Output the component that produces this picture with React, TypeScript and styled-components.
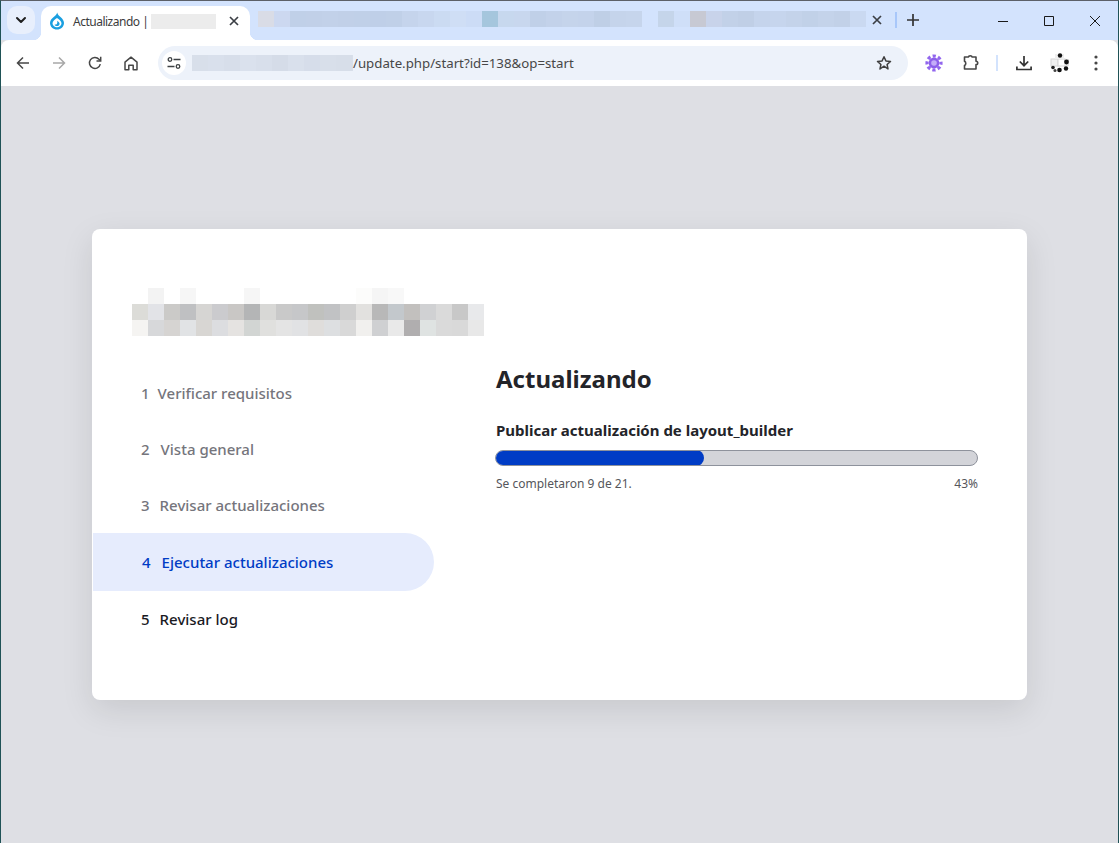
import styled, { createGlobalStyle } from 'styled-components'

const GlobalStyle = createGlobalStyle`
    html, body {
        margin: 0;
        padding: 0;
        height: 100%;
        overflow: hidden;
        background: #dedfe4;
    }
    * {
        box-sizing: border-box;
    }
`

const logoRows = [
    ['', '#f3f3f3', '', '#f6f6f6', '', '', '', '#f6f6f6', '', '', '', '', '', '', '#fcfcfb', '#f5f5f5', '#f8f8f8', '', '', '', '', ''],
    ['#dcdcd8', '#e2e3e7', '#cbcac8', '#bfc0c2', '#d6d5d3', '#cbcbce', '#c9c7c5', '#b4b5b6', '#d8d8d6', '#c9c9c9', '#c6c7c9', '#c0c1be', '#c1c2c4', '#cfcfcf', '#e2e1df', '#b8b8b8', '#c3c8cc', '#c2c0be', '#d0d1d3', '#dadada', '#c8c8c8', '#e8e9eb'],
    ['#f5f4f2', '#d7d8da', '#d6d4d2', '#e1e3e5', '#d8d6d3', '#dcdde0', '#e5e3e1', '#d2d5d3', '#e0e0de', '#e4e4e4', '#e1e2e4', '#dfdddb', '#dddfe1', '#d9d9d9', '#f1f0ee', '#cfd0d2', '#e9e9e9', '#b0aeaf', '#dfe3e2', '#dadada', '#d9d9d9', '#e8e8e8'],
]

const tabBlurA = ['#d9dce6', '#ccd8f0', '#c0d0e8', '#c1d0e8', '#c2d1e9', '#c1d0e8', '#c0d0e8', '#bfcfe8', '#c0d0e8', '#c5d4ec', '#c8d7ef', '#cbdbf2', '#cfdef5', '#ccdcf6', '#a5c6dd', '#c7d8ee', '#c8d7ee', '#c0d0e8', '#c3d2ea', '#c5d4eb', '#c4d3eb', '#bfcfe6', '#c5d4eb', '#c6d5ec']
const tabBlurB = ['#c5d5ea', '#cfdff8', '#c7c9d3', '#c8d3ea', '#c2d1e8', '#c0cfe6', '#c5d4ec', '#c6d5ed', '#c4d3ea', '#c1d1e8', '#c4d3ea', '#c2d1e8', '#cad9f1']
const urlBlur = ['#d8dfea', '#d9e0ec', '#d7deea', '#dae1ed', '#d8dfeb', '#d5dce8', '#d9e0ec', '#d6ddea', '#d8dfea', '#d7dee9', '#d8dfea']

const steps = [
    { num: 1, label: 'Verificar requisitos', state: 'done', gap: 8 },
    { num: 2, label: 'Vista general', state: 'done', gap: 11 },
    { num: 3, label: 'Revisar actualizaciones', state: 'done', gap: 10 },
    { num: 4, label: 'Ejecutar actualizaciones', state: 'active', gap: 11 },
    { num: 5, label: 'Revisar log', state: 'next', gap: 10 },
] as const

const DropIcon = () => (
    <svg width="16" height="18" viewBox="0 0 16 18">
        <path d="M8.200 .5C8.600 2.800 10.300 3.900 11.800 5.200 13.600 6.800 15 8.700 15 11 15 14.800 11.800 17.500 8 17.500 4.200 17.500 1 14.800 1 11 1 8.700 2.500 6.700 4.400 5.200 6 3.900 7.700 2.800 8.200 .5Z" fill="#1a9fe0" />
        <path d="M8 6C9.800 7.300 12.500 8.900 12.500 11.300 12.500 13.600 10.500 15.300 8 15.300 5.500 15.300 3.500 13.600 3.500 11.300 3.500 8.900 6.200 7.300 8 6Z" fill="#fff" />
        <path d="M8.200 8.700C9.600 9.700 10.600 10.500 10.600 11.800 10.600 13.200 9.400 14.100 8 14.100 6.800 14.100 5.800 13.500 5.600 12.500 7.300 13 8.800 12 8.200 8.700Z" fill="#1a9fe0" />
    </svg>
)

const Chevron = () => (
    <svg width="12" height="8" viewBox="0 0 12 8" fill="none" stroke="#1f1f1f" strokeWidth="2" strokeLinecap="round" strokeLinejoin="round">
        <path d="M2 2l4 4 4-4" />
    </svg>
)

const SmallClose = () => (
    <svg width="10" height="10" viewBox="0 0 10 10" fill="none" stroke="#3b3f45" strokeWidth="1.700">
        <path d="M1 1l8 8M9 1L1 9" />
    </svg>
)

const ArrowIcon = ({ flip, color }: { flip?: boolean, color: string }) => (
    <svg width="14" height="14" viewBox="0 0 14 14" fill="none" stroke={color} strokeWidth="1.500" style={flip ? { transform: 'scaleX(-1)' } : undefined}>
        <path d="M13 7H1.500M7 1.500L1.500 7 7 12.500" />
    </svg>
)

const ReloadIcon = () => (
    <svg width="14" height="14" viewBox="0 0 14 14" fill="none" stroke="#474747" strokeWidth="1.500">
        <path d="M12.300 8.200A5.500 5.500 0 1 1 11 3.200L12.600 4.800" />
        <path d="M12.700.8v4.200H8.500" />
    </svg>
)

const HomeIcon = () => (
    <svg width="14" height="15" viewBox="0 0 14 15" fill="none" stroke="#474747" strokeWidth="1.500" strokeLinejoin="round">
        <path d="M1 6.200L7 1.200l6 5v7.600H9.200V9.300H4.800v4.500H1z" />
    </svg>
)

const TuneIcon = () => (
    <svg width="14" height="14" viewBox="0 0 14 14" fill="none" stroke="#3c4043" strokeWidth="1.300">
        <circle cx="3" cy="3.500" r="1.800" />
        <path d="M6.500 3.500H13.500M.5 10.500H7.500" />
        <circle cx="11" cy="10.500" r="1.800" />
    </svg>
)

const StarIcon = () => (
    <svg width="16" height="16" viewBox="0 0 16 16" fill="none" stroke="#3f3f3f" strokeWidth="1.500" strokeLinejoin="round">
        <path d="M8 1.700l1.900 4.200 4.600.5-3.400 3.100.9 4.500L8 11.200l-4 2.800.9-4.500L1.500 6.400l4.600-.5z" />
    </svg>
)

const GearIcon = () => (
    <svg width="18" height="18" viewBox="0 0 18 18">
        <circle cx="9" cy="9" r="7" fill="none" stroke="#9266ee" strokeWidth="3.200" strokeDasharray="3.200 2.300" strokeDashoffset="1.600" />
        <circle cx="9" cy="9" r="5.400" fill="#8d60ea" />
        <circle cx="9" cy="9" r="2.800" fill="#c4adf8" />
    </svg>
)

const PuzzleIcon = () => (
    <svg width="18" height="16" viewBox="0 0 18 16" fill="none" stroke="#474747" strokeWidth="1.600" strokeLinejoin="round">
        <path d="M2.500 2H6.500C6.500 .4 10 .4 10 2h4v4.200c2.300 0 2.300 3.400 0 3.400V14H2.500V10.500C4.200 9.800 4.200 7 2.500 6.300z" />
    </svg>
)

const DownloadIcon = () => (
    <svg width="16" height="16" viewBox="0 0 16 16" fill="none" stroke="#333" strokeWidth="1.700">
        <path d="M8 1v9.500M3.800 6.500L8 10.700l4.200-4.200M.9 11.500v3h14.200v-3" />
    </svg>
)

const AvatarIcon = () => (
    <svg width="20" height="22" viewBox="0 0 20 22">
        <rect x="1" y="7" width="7" height="7" fill="#f1f1f1" stroke="#d6d6d6" />
        <rect x="8" y="7" width="7" height="7" fill="#fff" stroke="#d6d6d6" />
        <rect x="15" y="7" width="4" height="7" fill="#e4e4e4" />
        <rect x="5" y="2" width="9" height="5" fill="#efefef" />
        <circle cx="10" cy="3.500" r="2.200" fill="#111" />
        <circle cx="16.500" cy="10" r="2.400" fill="#111" />
        <circle cx="3" cy="15.500" r="1.800" fill="#222" />
        <circle cx="9.500" cy="18" r="2.300" fill="#111" />
        <circle cx="16" cy="16.500" r="2.200" fill="#111" />
        <circle cx="5" cy="18.500" r="1.500" fill="#444" />
    </svg>
)

const DotsIcon = () => (
    <svg width="4" height="16" viewBox="0 0 4 16" fill="#474747">
        <circle cx="2" cy="2" r="1.600" />
        <circle cx="2" cy="8" r="1.600" />
        <circle cx="2" cy="14" r="1.600" />
    </svg>
)

export default function App() {
    return (
        <Window>
            <GlobalStyle />
            <TabStrip>
                <TabSearch><Chevron /></TabSearch>
                <ActiveTab>
                    <DropIcon />
                    <TabTitle>Actualizando |</TabTitle>
                    <TitleBlur />
                    <TabClose><SmallClose /></TabClose>
                </ActiveTab>
                <BlurRow $ml={8}>
                    {tabBlurA.map((c, i) => <BlurCell key={i} $c={c} />)}
                </BlurRow>
                <BlurRow $ml={16}>
                    {tabBlurB.map((c, i) => <BlurCell key={i} $c={c} />)}
                </BlurRow>
                <SecondClose><SmallClose /></SecondClose>
                <TabDivider />
                <NewTab>
                    <svg width="12" height="12" viewBox="0 0 12 12" stroke="#333" strokeWidth="1.700"><path d="M6 0v12M0 6h12" /></svg>
                </NewTab>
                <WindowControls>
                    <WindowButton>
                        <svg width="10" height="10" viewBox="0 0 10 10" stroke="#1a1a1a"><path d="M0 5.500h10" /></svg>
                    </WindowButton>
                    <WindowButton>
                        <svg width="10" height="10" viewBox="0 0 10 10" fill="none" stroke="#1a1a1a"><path d="M.5.500h9v9h-9z" /></svg>
                    </WindowButton>
                    <WindowButton>
                        <svg width="10" height="10" viewBox="0 0 10 10" stroke="#1a1a1a"><path d="M0 0l10 10M10 0L0 10" /></svg>
                    </WindowButton>
                </WindowControls>
            </TabStrip>
            <Toolbar>
                <NavButton><ArrowIcon color="#474747" /></NavButton>
                <NavButton><ArrowIcon flip color="#a8a8a8" /></NavButton>
                <NavButton><ReloadIcon /></NavButton>
                <NavButton><HomeIcon /></NavButton>
                <AddressBar>
                    <SiteInfo><TuneIcon /></SiteInfo>
                    <UrlBlur>
                        {urlBlur.map((c, i) => <BlurCell key={i} $c={c} />)}
                    </UrlBlur>
                    <UrlText>/update.php/start?id=138&amp;op=start</UrlText>
                    <BookmarkSlot><StarIcon /></BookmarkSlot>
                </AddressBar>
                <ToolGroup>
                    <NavButton><GearIcon /></NavButton>
                    <PuzzleSlot><PuzzleIcon /></PuzzleSlot>
                    <ToolDivider />
                    <NavButton><DownloadIcon /></NavButton>
                    <NavButton><AvatarIcon /></NavButton>
                    <NavButton><DotsIcon /></NavButton>
                </ToolGroup>
            </Toolbar>
            <Page>
                <Card>
                    <LogoMosaic>
                        {logoRows.flat().map((c, i) => <BlurCell key={i} $c={c || 'transparent'} />)}
                    </LogoMosaic>
                    <CardBody>
                        <StepList>
                            {steps.map(step => (
                                <StepItem key={step.num} $state={step.state}>
                                    <StepNumber $gap={step.gap}>{step.num}</StepNumber>
                                    {step.label}
                                </StepItem>
                            ))}
                        </StepList>
                        <Main>
                            <Title>Actualizando</Title>
                            <ProgressLabel>Publicar actualización de layout_builder</ProgressLabel>
                            <ProgressTrack>
                                <ProgressFill style={{ width: '43.500%' }} />
                            </ProgressTrack>
                            <ProgressInfo>
                                <span>Se completaron 9 de 21.</span>
                                <span>43%</span>
                            </ProgressInfo>
                        </Main>
                    </CardBody>
                </Card>
            </Page>
        </Window>
    )
}

const Window = styled.div`
    width: 1119px;
    height: 843px;
    display: flex;
    flex-direction: column;
    border-left: 1px solid #1f5256;
    border-right: 1px solid #1f5256;
    border-top: 1px solid #5c6068;
    background: #dedfe4;
    font-family: "Noto Sans", "Liberation Sans", sans-serif;
`

const TabStrip = styled.div`
    height: 39px;
    flex: none;
    display: flex;
    align-items: flex-start;
    background: #d3e3fd;
`

const TabSearch = styled.div`
    width: 28px;
    height: 28px;
    margin: 5px 0 0 6px;
    flex: none;
    display: flex;
    align-items: center;
    justify-content: center;
    border-radius: 10px;
    background: #e8effc;
`

const ActiveTab = styled.div`
    position: relative;
    width: 209px;
    height: 34px;
    margin: 5px 0 0 6px;
    flex: none;
    padding: 0 8px 4px 8px;
    display: flex;
    align-items: center;
    background: #fff;
    border-radius: 10px 10px 0 0;

    &::before, &::after {
        content: '';
        position: absolute;
        bottom: 0;
        width: 8px;
        height: 8px;
    }
    &::before {
        left: -8px;
        background: radial-gradient(circle at 0 0, transparent 8px, #fff 8.500px);
    }
    &::after {
        right: -8px;
        background: radial-gradient(circle at 100% 0, transparent 8px, #fff 8.500px);
    }
`

const TabTitle = styled.span`
    margin-left: 8px;
    font: 400 12px "Noto Sans", sans-serif;
    letter-spacing: -0.5px;
    color: #3c3c3c;
    white-space: nowrap;
`

const TitleBlur = styled.span`
    width: 65px;
    height: 15px;
    margin-left: 3px;
    background: #ececec;
`

const TabClose = styled.span`
    margin-left: auto;
    margin-right: 3px;
    display: flex;
`

const BlurRow = styled.div<{ $ml: number }>`
    display: flex;
    margin: 10px 0 0 ${p => p.$ml}px;
    height: 16px;
    flex: none;
`

const BlurCell = styled.span<{ $c: string }>`
    display: block;
    width: 16px;
    height: 16px;
    flex: none;
    background: ${p => p.$c};
`

const SecondClose = styled.span`
    margin: 14px 0 0 6px;
    display: flex;
`

const TabDivider = styled.span`
    width: 2px;
    height: 16px;
    margin: 11px 0 0 13px;
    background: #a8c7fa;
`

const NewTab = styled.span`
    margin: 13px 0 0 10px;
    display: flex;
`

const WindowControls = styled.div`
    margin: 0 0 0 auto;
    display: flex;
`

const WindowButton = styled.span`
    width: 46px;
    height: 39px;
    display: flex;
    align-items: center;
    justify-content: center;
`

const Toolbar = styled.div`
    height: 46px;
    flex: none;
    display: flex;
    align-items: center;
    padding-left: 4px;
    background: #fff;
    border-radius: 8px 8px 0 0;
`

const NavButton = styled.span`
    width: 36px;
    height: 34px;
    flex: none;
    display: flex;
    align-items: center;
    justify-content: center;
`

const PuzzleSlot = styled(NavButton)`
    margin-left: 1px;
    margin-right: -1px;
`

const AddressBar = styled.div`
    width: 750px;
    height: 34px;
    margin-left: 9px;
    flex: none;
    display: flex;
    align-items: center;
    padding-left: 4px;
    border-radius: 17px;
    background: #edf2fa;
`

const SiteInfo = styled.span`
    width: 24px;
    height: 24px;
    flex: none;
    display: flex;
    align-items: center;
    justify-content: center;
    border-radius: 50%;
    background: #fff;
`

const UrlBlur = styled.div`
    display: flex;
    width: 161px;
    margin-left: 6px;
    overflow: hidden;
`

const UrlText = styled.span`
    font: 400 13.250px "Noto Sans", sans-serif;
    color: #474747;
    white-space: nowrap;
`

const BookmarkSlot = styled.span`
    margin-left: auto;
    margin-right: 16px;
    display: flex;
`

const ToolGroup = styled.div`
    display: flex;
    align-items: center;
    margin-left: 8px;
`

const ToolDivider = styled.span`
    width: 2px;
    height: 16px;
    margin: 0 8px;
    background: #d3e3fd;
`

const Page = styled.main`
    flex: 1;
    display: flex;
    align-items: center;
    justify-content: center;
`

const Card = styled.section`
    width: 935px;
    height: 471px;
    padding-top: 59px;
    border-radius: 8px;
    background: #fff;
    box-shadow: 0 10px 32px rgba(0, 0, 0, 0.1);
`

const LogoMosaic = styled.div`
    display: grid;
    grid-template-columns: repeat(22, 16px);
    margin-left: 40px;
`

const CardBody = styled.div`
    display: grid;
    grid-template-columns: 341px 483px;
    column-gap: 61px;
    margin-top: 29px;
    padding-left: 1px;
`

const StepList = styled.ol`
    list-style: none;
    margin: 0;
    padding: 0;
`

const stepColors = {
    done: '#75757c',
    active: '#003cc5',
    next: '#1a1a1f',
}

const StepItem = styled.li<{ $state: 'done' | 'active' | 'next' }>`
    height: ${p => (p.$state === 'active' ? 58 : 56)}px;
    display: flex;
    align-items: center;
    padding-left: ${p => (p.$state === 'active' ? 49 : 48)}px;
    font-size: 15px;
    font-weight: 500;
    color: ${p => stepColors[p.$state]};
    border-radius: 0 29px 29px 0;
    background: ${p => (p.$state === 'active' ? '#e6ecfd' : 'transparent')};
`

const StepNumber = styled.span<{ $gap: number }>`
    margin-right: ${p => p.$gap}px;
`

const Main = styled.div`
    display: flex;
    flex-direction: column;
`

const Title = styled.h1`
    margin: 0 0 0 1px;
    font-size: 24px;
    line-height: 28px;
    font-weight: 700;
    color: #232429;
`

const ProgressLabel = styled.div`
    margin: 27px 0 0 1px;
    font-size: 15px;
    line-height: 20px;
    font-weight: 700;
    color: #232429;
`

const ProgressTrack = styled.div`
    height: 16px;
    margin-top: 10px;
    border: 1px solid #8e929c;
    border-radius: 8px;
    background: #d3d4d9;
    overflow: hidden;
`

const ProgressFill = styled.div`
    height: 100%;
    margin: -1px 0 0 -1px;
    box-sizing: content-box;
    padding: 1px 0;
    background: #003cc5;
    border-radius: 8px;
`

const ProgressInfo = styled.div`
    display: flex;
    justify-content: space-between;
    margin: 10px 0 0 1px;
    font-size: 12px;
    line-height: 16px;
    color: #55565b;
`
